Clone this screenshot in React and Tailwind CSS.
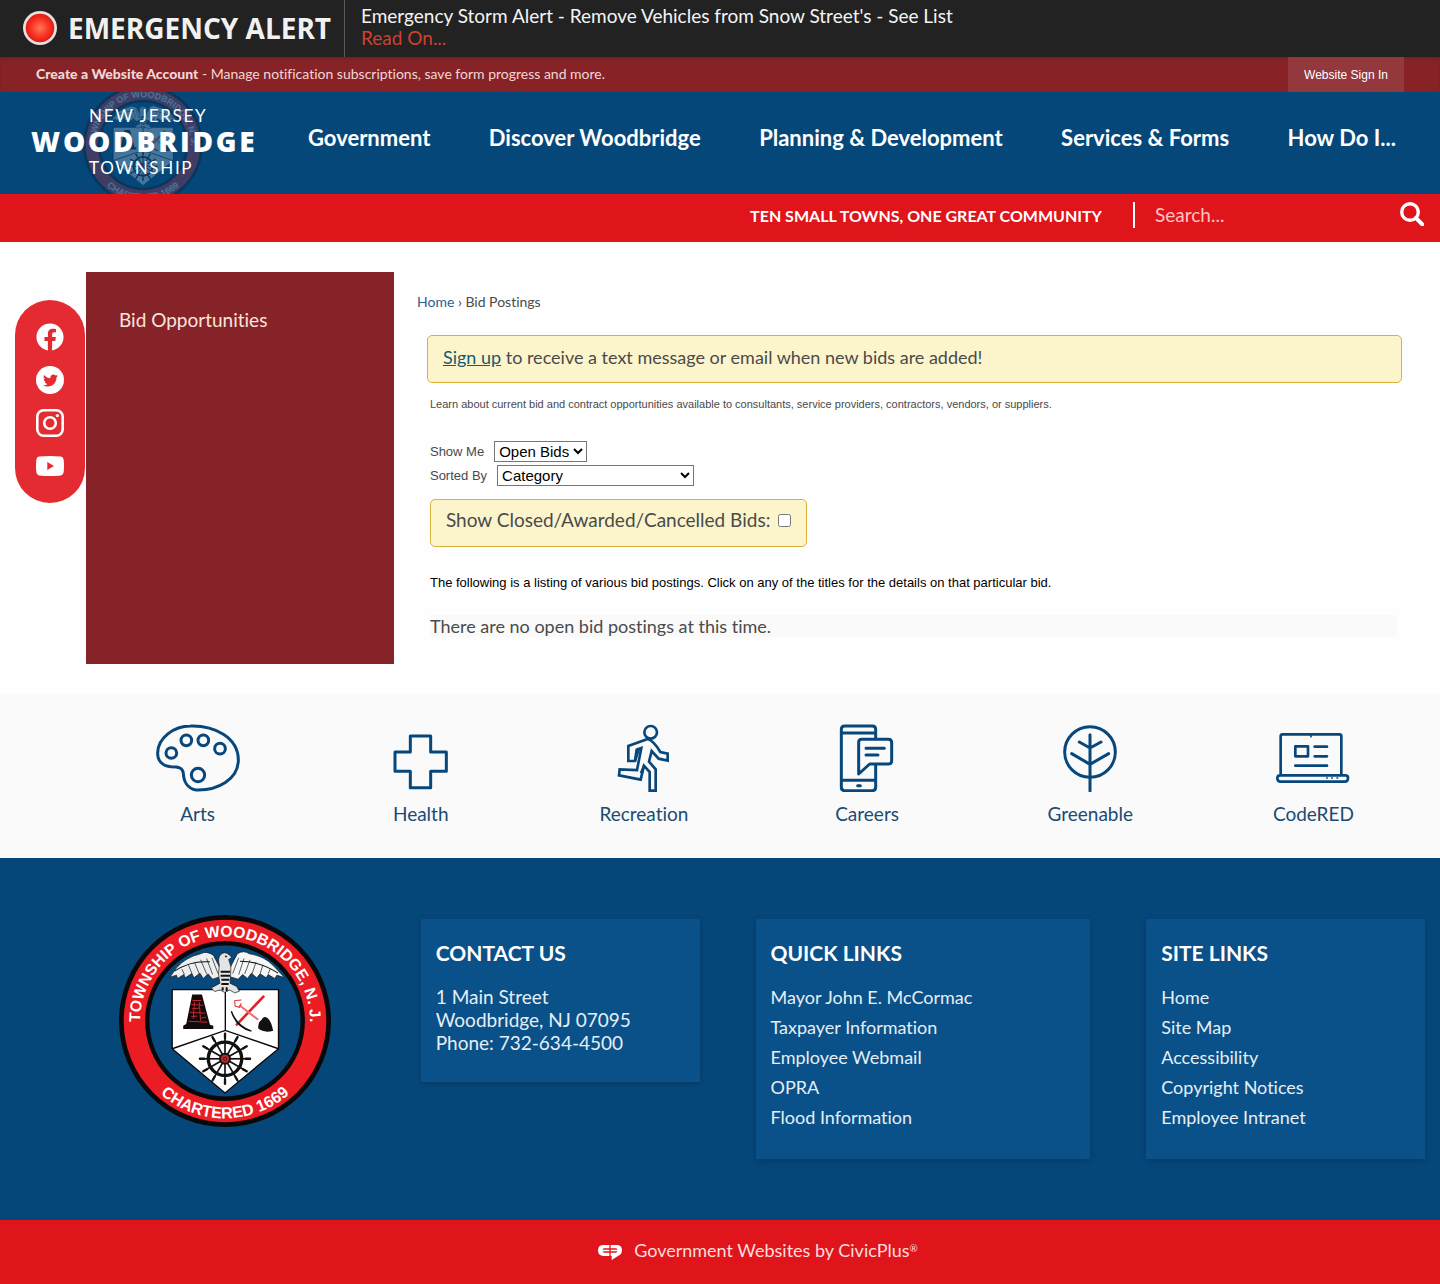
import React from "react";
import { FaFacebook, FaTwitter } from "react-icons/fa";

const NAV = ["Government", "Discover Woodbridge", "Planning & Development", "Services & Forms", "How Do I..."];
const QUICK_LINKS = ["Mayor John E. McCormac", "Taxpayer Information", "Employee Webmail", "OPRA", "Flood Information"];
const SITE_LINKS = ["Home", "Site Map", "Accessibility", "Copyright Notices", "Employee Intranet"];

function Seal({ id, className }) {
  const spokes = Array.from({ length: 12 }, (_, i) => i * 30);
  return (
    <svg viewBox="28 30 634 634" className={className} aria-hidden="true">
      <defs>
        <path id={id + "-top"} d="M92 371 A254 254 0 1 1 598 371" />
        <path id={id + "-bottom"} d="M54 347 A291 291 0 0 0 636 347" />
      </defs>
      <circle cx="345" cy="347" r="317" fill="#0a0809" />
      <circle cx="345" cy="347" r="303" fill="#ec1c24" />
      <circle cx="345" cy="347" r="239" fill="#0a0809" />
      <circle cx="345" cy="347" r="226" fill="#07487d" />
      <g fill="#fff" fontWeight="700" fontFamily="'Liberation Sans',Arial,sans-serif" textAnchor="middle">
        <text fontSize="47"><textPath href={"#" + id + "-top"} startOffset="50%">TOWNSHIP OF WOODBRIDGE, N. J.</textPath></text>
        <text fontSize="48"><textPath href={"#" + id + "-bottom"} startOffset="50%">CHARTERED 1669</textPath></text>
      </g>
      <path d="M187 253 H505 V430 L345 562 L187 430 Z" fill="#fff" stroke="#0a0809" strokeWidth="4" />
      <path d="M346 250 V376 M187 430 L346 375 L505 430" fill="none" stroke="#0a0809" strokeWidth="4" />
      {/* eagle */}
      <g stroke="#111" strokeWidth="2" strokeLinejoin="round">
        <path d="M338 205 Q322 172 310 150 Q290 136 272 146 Q228 156 200 188 L180 216 L200 210 L203 220 L222 208 L226 218 L246 205 L252 218 L270 204 L280 220 L294 206 L308 222 L332 214 Z" fill="#eceef0" />
        <path d="M352 205 Q368 172 382 146 Q400 134 418 146 Q462 152 490 182 L523 217 L500 210 L494 220 L474 208 L468 218 L450 206 L440 218 L424 204 L412 220 L398 208 L384 222 L358 214 Z" fill="#f6f7f7" />
        <path d="M306 158 L324 205 M290 160 L308 208 M272 164 L290 206 M254 172 L268 206 M236 180 L246 205 M216 192 L224 208 M386 158 L368 205 M402 160 L386 208 M420 164 L404 206 M438 170 L426 206 M458 180 L450 206 M480 192 L474 206" fill="none" strokeWidth="2" />
        <path d="M194 198 Q240 166 300 170 M390 168 Q450 168 504 204" fill="none" strokeWidth="3" />
        <path d="M328 180 Q322 160 332 148 Q344 138 356 148 L366 156 L356 163 Q366 184 362 210 L360 234 L380 244 L388 258 L374 263 L358 254 L345 262 L330 254 L314 259 L304 248 L330 234 Q322 206 328 180 Z" fill="#e2e4e6" />
        <path d="M332 200 H360 M332 212 H360 M334 224 H358 M334 236 H356 M338 246 V256 M350 246 V258" fill="none" strokeWidth="6" />
        <circle cx="348" cy="154" r="2" fill="#111" />
      </g>
      {/* furnace */}
      <path d="M247 268 L276 268 L300 358 L310 361 V371 H220 V361 L229 356 Z" fill="#120a0b" />
      <path d="M248 286 H274 M244 298 L280 300 M246 310 L270 308 M240 321 L286 324 M244 334 L262 332 M274 338 L288 336 M236 348 L292 351 M254 290 L250 340 M268 290 L272 346" stroke="#c5282f" strokeWidth="3" fill="none" />
      {/* pick, shovel and coal */}
      <path d="M462 272 L378 360" stroke="#e0242b" strokeWidth="8" />
      <path d="M388 300 L444 343" stroke="#ee6d70" strokeWidth="6" />
      <path d="M394 284 L374 286 L375 302 L388 306 L394 294" stroke="#e0242b" strokeWidth="3" fill="none" />
      <path d="M364 318 Q380 362 424 377 Q380 368 364 318 Z" fill="#111" stroke="#111" strokeWidth="4" />
      <path d="M444 369 Q444 350 454 344 Q460 330 472 338 Q484 348 489 376 Q462 384 444 369 Z" fill="#111" />
      {/* ship wheel */}
      <g transform="translate(345 460)">
        {spokes.map((a) => (
          <g key={a} transform={"rotate(" + a + ")"}>
            <path d="M0 0 V-72" stroke="#111" strokeWidth="5" />
            <path d="M0 -62 V-75" stroke="#111" strokeWidth="7" strokeLinecap="round" />
          </g>
        ))}
        <circle r="50" fill="none" stroke="#111" strokeWidth="10" />
        <circle r="18" fill="#111" />
        <circle r="12" fill="#c1272d" />
        <circle r="5" fill="none" stroke="#111" strokeWidth="2" />
      </g>
    </svg>
  );
}

function LineIcon({ x, children }) {
  return (
    <svg viewBox={x + " 42 252 204"} className="h-[68px] w-[84px]" fill="none" stroke="#07477b" strokeWidth="9" strokeLinecap="round" strokeLinejoin="round" aria-hidden="true">
      {children}
    </svg>
  );
}

const SERVICES = [
  {
    label: "Arts",
    icon: (
      <LineIcon x={47}>
        <path d="M150 48 C222 46 294 82 294 150 C294 208 232 242 168 240 C140 236 130 212 129 190 C127 174 116 170 92 170 C66 168 51 152 52 128 C53 84 100 48 150 48 Z" />
        <circle cx="93" cy="129" r="16" /><circle cx="138" cy="91" r="16" /><circle cx="189" cy="91" r="16" /><circle cx="239" cy="116" r="16" /><circle cx="173" cy="195" r="20" />
      </LineIcon>
    ),
  },
  {
    label: "Health",
    icon: (
      <LineIcon x={718}>
        <path d="M812 78 H873 V126 H920 V184 H873 V233 H812 V184 H766 V126 H812 Z" />
      </LineIcon>
    ),
  },
  {
    label: "Recreation",
    icon: (
      <LineIcon x={37}>
        <g strokeLinejoin="miter" strokeLinecap="butt" strokeWidth="8">
          <circle cx="183" cy="67" r="19" />
          <path d="M174 87 L116 108 V153 H136 L141 119 L155 114 L142 180 L90 178 L88 196 L153 209 L163 167 L180 186 V242 H198 V178 L178 155 L186 123 L207 146 L234 152 V131 L212 126 Q192 92 174 87 Z" />
          <path d="M136 153 L148 114 M163 167 L154 190" />
        </g>
      </LineIcon>
    ),
  },
  {
    label: "Careers",
    icon: (
      <LineIcon x={706}>
        <path d="M858 84 V58 Q858 48 848 48 H765 Q755 48 755 58 V232 Q755 242 765 242 H848 Q858 242 858 232 V166 M756 69 H858 M756 211 H858 M804 227 H812" />
        <path d="M816 88 H896 Q906 88 906 98 V152 Q906 162 896 162 H840 L807 192 V97 Q807 88 816 88 Z M829 115 H884 M829 135 H865" />
      </LineIcon>
    ),
  },
  {
    label: "Greenable",
    icon: (
      <LineIcon x={55}>
        <circle cx="181" cy="126" r="76" />
        <path d="M181 74 V243 M149 96 L181 114 L214 96 M126 131 L181 163 L237 131" />
      </LineIcon>
    ),
  },
  {
    label: "CodeRED",
    icon: (
      <LineIcon x={723}>
        <path d="M752 194 V78 Q752 73 758 73 H928 Q934 73 934 78 V194 M750 196 H946 Q954 196 954 203 Q954 215 944 215 H752 Q742 215 742 205 Q742 196 750 196 Z" strokeWidth="8" />
        <path d="M796 109 H834 V139 H796 Z M854 110 H891 M854 139 H891 M796 167 H891" strokeWidth="8" />
        <path d="M843 76 V80 M890 204 H892 M905 204 H907 M921 204 H923" strokeWidth="5" />
      </LineIcon>
    ),
  },
];

function FooterCard({ title, children, className }) {
  return (
    <section className={"mt-1 bg-[#0a5189] px-[15px] pt-5 text-white shadow-[0_2px_6px_rgba(0,30,60,0.3)] " + className}>
      <h2 className="text-[21px] leading-7 font-bold">{title}</h2>
      {children}
    </section>
  );
}

function LinkList({ items }) {
  return (
    <ul className="mt-[18px] flex flex-col gap-[6px]">
      {items.map((t) => (
        <li key={t}><a href="#" className="block text-lg leading-6 text-[#e6eef5]">{t}</a></li>
      ))}
    </ul>
  );
}

const SOCIAL = [
  { name: "Facebook", icon: <FaFacebook className="size-7" /> },
  {
    name: "Twitter",
    icon: (
      <span className="flex size-7 items-center justify-center rounded-full bg-white text-[#e32b31]">
        <FaTwitter className="size-[15px]" />
      </span>
    ),
  },
  {
    name: "Instagram",
    icon: (
      <svg viewBox="0 0 28 28" className="size-7" fill="none" stroke="currentColor" aria-hidden="true">
        <rect x="1.3" y="1.3" width="25.4" height="25.4" rx="6.5" strokeWidth="2.6" />
        <circle cx="14" cy="14" r="5.8" strokeWidth="2.6" />
        <circle cx="21.4" cy="6.6" r="1.7" fill="currentColor" stroke="none" />
      </svg>
    ),
  },
  {
    name: "YouTube",
    icon: (
      <svg viewBox="0 0 28 28" className="size-7" aria-hidden="true">
        <path fillRule="evenodd" fill="currentColor" d="M3 4.6 Q14 3.4 25 4.6 Q27.4 5 27.7 8 Q28.3 14 27.7 20 Q27.4 23 25 23.4 Q14 24.6 3 23.4 Q0.6 23 0.3 20 Q-0.3 14 0.3 8 Q0.6 5 3 4.6 Z M11.3 10 V18 L18 14 Z" />
      </svg>
    ),
  },
];

export default function App() {
  return (
    <div className="min-h-screen bg-[#fefefe] font-['Lato',sans-serif] text-[#4a4a4a] [font-variant-ligatures:none]">
      <section aria-label="Emergency alert" className="flex h-[57px] bg-[#222]">
        <div className="flex w-[345px] shrink-0 items-center border-r border-[#5a5a5a] pb-[2px] pl-[22px]">
          <svg viewBox="0 0 36 36" className="size-9 shrink-0" aria-hidden="true">
            <defs>
              <radialGradient id="lamp"><stop offset="0" stopColor="#ff7a5c" /><stop offset="0.55" stopColor="#fb3a28" /><stop offset="1" stopColor="#e01a12" /></radialGradient>
            </defs>
            <circle cx="18" cy="18" r="17" fill="#e6e0df" />
            <circle cx="18" cy="18" r="14.3" fill="url(#lamp)" />
          </svg>
          <h1 className="ml-[10px] font-['Open_Sans',sans-serif] text-[28px] font-bold whitespace-nowrap text-[#f1f1f1]">EMERGENCY ALERT</h1>
        </div>
        <div className="pt-[5px] pl-4 text-[19px] leading-[22px]">
          <p className="text-[#f4f4f4]">Emergency Storm Alert - Remove Vehicles from Snow Street's - See List</p>
          <a href="#" className="text-[#d0402f]">Read On...</a>
        </div>
      </section>

      <section className="flex h-[35px] items-center justify-between bg-[#872327] pr-9 pl-9 text-sm text-[#f0d6d7] shadow-[inset_0_2px_2px_rgba(0,0,0,0.15)]">
        <p className="pb-[2px]"><a href="#" className="font-black">Create a Website Account</a> - Manage notification subscriptions, save form progress and more.</p>
        <a href="#" className="flex h-full w-[116px] items-center justify-center bg-[#93383d] font-['Liberation_Sans',Arial,sans-serif] text-xs text-white">Website Sign In</a>
      </section>

      <header className="relative flex h-[102px] items-center justify-between gap-8 overflow-hidden bg-[#06477a] pr-11 pl-[31px]">
        <a href="#" className="relative flex h-full w-[222px] flex-col pt-3 text-white" aria-label="Woodbridge Township, New Jersey">
          <Seal id="crest" className="absolute -top-[7px] left-[52px] size-[120px] opacity-25" />
          <span className="relative pl-[58px] text-[17px] leading-6 tracking-widest">NEW JERSEY</span>
          <span className="relative font-['Open_Sans',sans-serif] text-[28px] leading-[26px] font-extrabold tracking-widest">WOODBRIDGE</span>
          <span className="relative pl-[58px] text-[17px] leading-[28px] tracking-widest">TOWNSHIP</span>
        </a>
        <nav className="mb-3 ml-[23px] flex flex-1 justify-between text-[22px] font-bold whitespace-nowrap text-white">
          {NAV.map((n) => <a key={n} href="#">{n}</a>)}
        </nav>
      </header>

      <div className="flex h-12 items-start justify-end bg-[#df151b] pt-2 pr-4 text-white">
        <p className="mr-[31px] text-base leading-7 font-bold">TEN SMALL TOWNS, ONE GREAT COMMUNITY</p>
        <form className="flex items-start border-l-2 border-white pl-5" onSubmit={(e) => e.preventDefault()}>
          <input type="text" aria-label="Search" placeholder="Search..." className="h-[26px] w-[245px] text-[19px] outline-none placeholder:text-[#ffc4c4]" />
          <button type="submit" aria-label="Search">
            <svg viewBox="0 0 24 24" className="size-6" fill="none" stroke="#fff" aria-hidden="true">
              <circle cx="10" cy="10" r="8.3" strokeWidth="3.4" />
              <path d="M16 16 L22.3 22.3" strokeWidth="4" strokeLinecap="round" />
            </svg>
          </button>
        </form>
      </div>

      <div className="flex items-start py-[30px] pr-[15px] pl-[15px]">
        <nav aria-label="Social media" className="mt-7 flex w-[70px] shrink-0 flex-col items-center gap-[15px] rounded-full bg-[#e32b31] pt-[23px] pb-[23px] text-white">
          {SOCIAL.map((s) => <a key={s.name} href="#" aria-label={s.name}>{s.icon}</a>)}
        </nav>
        <div className="ml-px flex min-h-[392px] flex-1">
          <aside className="w-[23%] bg-[#852328] px-[33px] pt-9">
            <a href="#" className="text-[19px] leading-6 text-[#fbe4dc]">Bid Opportunities</a>
          </aside>
          <main className="flex-1 pt-5 pr-[23px] pl-[23px]">
            <p className="text-sm leading-5"><a href="#" className="text-[#2c5f8c]">Home</a> › Bid Postings</p>
            <div className="mt-[23px] ml-[10px] rounded-[5px] border border-[#d9b13b] bg-[#fcf5cc] px-[15px] pt-[9px] pb-[13px] text-lg leading-6">
              <a href="#" className="text-[#175a72] underline">Sign up</a> to receive a text message or email when new bids are added!
            </div>
            <div className="mr-[5px] ml-[13px] font-['Liberation_Sans',Arial,sans-serif]">
              <p className="mt-[13px] text-[11px] leading-4">Learn about current bid and contract opportunities available to consultants, service providers, contractors, vendors, or suppliers.</p>
              <div className="mt-[29px] flex items-center text-[13px]">
                <label htmlFor="show" className="mr-[10px]">Show Me</label>
                <select id="show" className="h-[21px] border border-[#767676] bg-white text-[15px] leading-[19px] text-black"><option>Open Bids</option></select>
              </div>
              <div className="mt-[3px] flex items-center text-[13px]">
                <label htmlFor="sort" className="mr-[10px]">Sorted By</label>
                <select id="sort" className="h-[21px] w-[197px] border border-[#767676] bg-white text-[15px] leading-[19px] text-black"><option>Category</option></select>
              </div>
              <div className="mt-[13px] flex w-fit items-center gap-2 rounded-[5px] border border-[#d9b13b] bg-[#fcf5cc] px-[15px] pt-[8px] pb-[14px] font-['Lato',sans-serif] text-[19px] leading-6">
                <label htmlFor="closed">Show Closed/Awarded/Cancelled Bids:</label>
                <input id="closed" type="checkbox" className="size-[13px]" />
              </div>
              <p className="mt-[26px] text-[13px] leading-5 text-black">The following is a listing of various bid postings. Click on any of the titles for the details on that particular bid.</p>
              <p className="mt-[22px] bg-[#fafafa] font-['Lato',sans-serif] text-lg leading-[22px]">There are no open bid postings at this time.</p>
            </div>
          </main>
        </div>
      </div>

      <nav aria-label="Services" className="grid grid-cols-6 bg-[#fafafa] pt-[30px] pr-[15px] pb-8 pl-[86px]">
        {SERVICES.map((s) => (
          <a key={s.label} href="#" className="flex flex-col items-center gap-[10px] text-[19px] leading-6 text-[#1b4a73]">
            {s.icon}
            {s.label}
          </a>
        ))}
      </nav>

      <footer>
        <div className="grid grid-cols-[279fr_279fr_335fr_279fr] items-start gap-14 bg-[#06477a] pt-[57px] pr-[15px] pb-[61px] pl-[86px]">
          <Seal id="seal" className="size-[212px] justify-self-center" />
          <FooterCard title="CONTACT US" className="pb-7">
            <address className="mt-[18px] text-[19px] leading-[23px] text-[#e6eef5] not-italic">
              1 Main Street<br />Woodbridge, NJ 07095<br />Phone: 732-634-4500
            </address>
          </FooterCard>
          <FooterCard title="QUICK LINKS" className="pb-[30px]"><LinkList items={QUICK_LINKS} /></FooterCard>
          <FooterCard title="SITE LINKS" className="pb-[30px]"><LinkList items={SITE_LINKS} /></FooterCard>
        </div>
        <div className="flex items-center justify-center gap-3 bg-[#df151b] pt-[18px] pb-[22px] pl-[76px] text-lg leading-6 text-[#ffdcdc]">
          <svg viewBox="0 0 72 48" className="mt-[3px] h-4 w-6" fill="#fff" aria-hidden="true">
            <path d="M34 3 H17 Q0 3 0 19 Q0 36 17 36 H34 V26 H20 Q14 26 14 22 H34 V17 H14 Q14 13 20 13 H34 Z" />
            <path d="M38 3 H55 Q72 3 72 19 Q72 32 60 36 L41 48 V36 H38 V26 H52 Q58 26 58 22 H38 V17 H58 Q58 13 52 13 H38 Z" />
          </svg>
          <a href="#">Government Websites by CivicPlus<sup className="text-[10px]">®</sup></a>
        </div>
      </footer>
    </div>
  );
}
